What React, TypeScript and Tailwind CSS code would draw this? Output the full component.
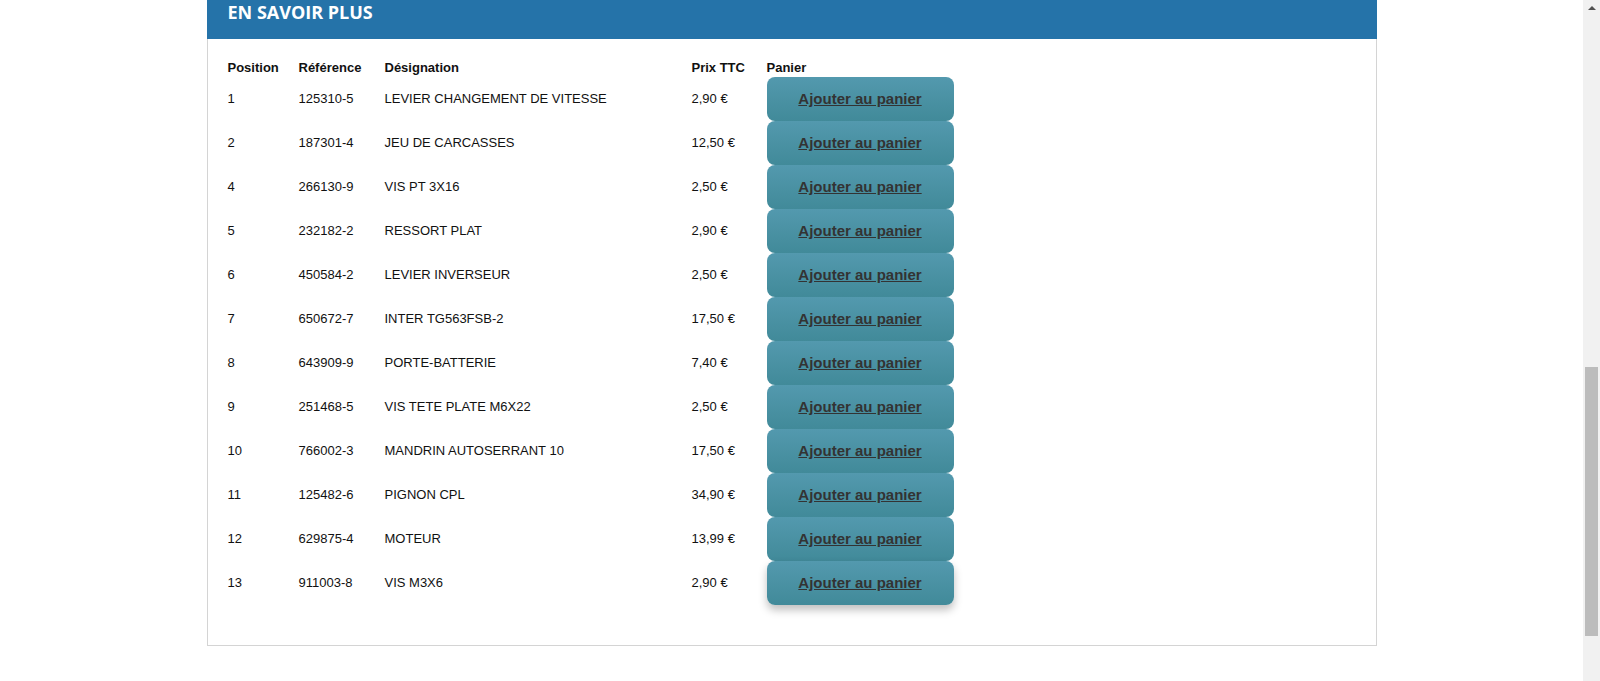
const rows: [string, string, string, string][] = [
  ["1", "125310-5", "LEVIER CHANGEMENT DE VITESSE", "2,90 €"],
  ["2", "187301-4", "JEU DE CARCASSES", "12,50 €"],
  ["4", "266130-9", "VIS PT 3X16", "2,50 €"],
  ["5", "232182-2", "RESSORT PLAT", "2,90 €"],
  ["6", "450584-2", "LEVIER INVERSEUR", "2,50 €"],
  ["7", "650672-7", "INTER TG563FSB-2", "17,50 €"],
  ["8", "643909-9", "PORTE-BATTERIE", "7,40 €"],
  ["9", "251468-5", "VIS TETE PLATE M6X22", "2,50 €"],
  ["10", "766002-3", "MANDRIN AUTOSERRANT 10", "17,50 €"],
  ["11", "125482-6", "PIGNON CPL", "34,90 €"],
  ["12", "629875-4", "MOTEUR", "13,99 €"],
  ["13", "911003-8", "VIS M3X6", "2,90 €"],
];

const cols = "grid grid-cols-[71px_86px_307px_75px_187px]";

export default function App() {
  return (
    <div className="flex h-[681px] w-full overflow-hidden bg-white font-['Liberation_Sans',Arial,sans-serif] text-[13px] text-[#111]">
      <main className="flex-1">
        <section className="mx-auto w-[1170px]">
          <div className="h-[39px] bg-[#2573a9] px-[21px]">
            <h2 className="font-['Open_Sans',sans-serif] text-[18px] font-bold leading-[24px] text-white">
              EN SAVOIR PLUS
            </h2>
          </div>
          <div className="border-x border-b border-[#d4d4d4] px-[20px] pb-[40px] pt-[19px]">
            <div className={`${cols} h-[19px] items-center font-bold`}>
              <span>Position</span>
              <span>Référence</span>
              <span>Désignation</span>
              <span>Prix TTC</span>
              <span>Panier</span>
            </div>
            {rows.map(([pos, ref, label, price], i) => (
              <div key={ref} className={`${cols} h-[44px] items-center`}>
                <span>{pos}</span>
                <span>{ref}</span>
                <span>{label}</span>
                <span>{price}</span>
                <button
                  type="button"
                  className={`relative flex h-[44px] items-center justify-center rounded-[8px] bg-gradient-to-b from-[#5399ae] to-[#418a99] text-[15px] font-bold text-[#333] underline ${
                    i === rows.length - 1 ? "shadow-[0_5px_8px_rgba(0,0,0,0.25)]" : ""
                  }`}
                >
                  Ajouter au panier
                </button>
              </div>
            ))}
          </div>
        </section>
      </main>
      <div className="flex h-[681px] w-[17px] flex-col items-center bg-[#f1f1f1]">
        <div className="mt-[6px] h-0 w-0 border-x-[4px] border-b-[4px] border-x-transparent border-b-[#505050]" />
        <div className="mt-[357px] h-[269px] w-[13px] bg-[#bcbcbc]" />
      </div>
    </div>
  );
}
